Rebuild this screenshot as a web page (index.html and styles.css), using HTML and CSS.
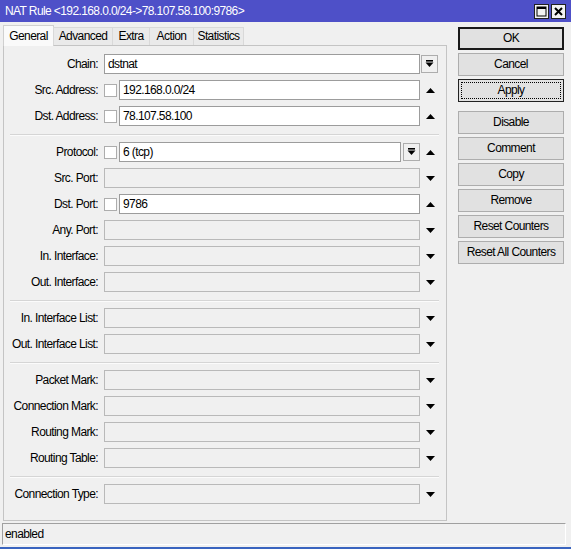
FILE: index.html
```html
<!DOCTYPE html>
<html>
<head>
<meta charset="utf-8">
<link rel="stylesheet" href="styles.css">
</head>
<body>
<div class="window">
  <div class="titlebar">
    <span class="title">NAT Rule &lt;192.168.0.0/24-&gt;78.107.58.100:9786&gt;</span>
    <div class="tb-buttons">
      <span class="tb-btn"><svg width="13" height="13" viewBox="0 0 13 13"><rect x="2" y="2" width="9" height="9" fill="none" stroke="#000" stroke-width="1"/><rect x="2" y="2" width="9" height="2" fill="#000"/></svg></span>
      <span class="tb-btn"><svg width="13" height="13" viewBox="0 0 13 13"><path d="M3 3 L10 10 M10 3 L3 10" stroke="#000" stroke-width="2"/></svg></span>
    </div>
  </div>

  <div class="main">
    <div class="left">
      <div class="tabs">
        <div class="tab selected w-general">General</div>
        <div class="tab w-advanced">Advanced</div>
        <div class="tab w-extra">Extra</div>
        <div class="tab w-action">Action</div>
        <div class="tab w-statistics">Statistics</div>
      </div>
      <div class="panel">
        <div class="row">
          <label class="lbl">Chain:</label>
          <div class="field full">dstnat</div>
          <span class="dropbtn chain-drop"><svg width="9" height="8" viewBox="0 0 9 8"><rect x="1" y="0" width="7" height="1.6" fill="#000"/><polygon points="0.5,2.5 8.5,2.5 4.5,7" fill="#000"/></svg></span>
        </div>
        <div class="row">
          <label class="lbl">Src. Address:</label>
          <span class="chk"></span>
          <div class="field withchk">192.168.0.0/24</div>
          <span class="arrow"><svg width="9" height="5" viewBox="0 0 9 5"><polygon points="0,5 9,5 4.5,0" fill="#000"/></svg></span>
        </div>
        <div class="row">
          <label class="lbl">Dst. Address:</label>
          <span class="chk"></span>
          <div class="field withchk">78.107.58.100</div>
          <span class="arrow"><svg width="9" height="5" viewBox="0 0 9 5"><polygon points="0,5 9,5 4.5,0" fill="#000"/></svg></span>
        </div>
        <div class="sep"></div>
        <div class="row">
          <label class="lbl">Protocol:</label>
          <span class="chk"></span>
          <div class="field proto">6 (tcp)</div>
          <span class="dropbtn proto-drop"><svg width="9" height="8" viewBox="0 0 9 8"><rect x="1" y="0" width="7" height="1.6" fill="#000"/><polygon points="0.5,2.5 8.5,2.5 4.5,7" fill="#000"/></svg></span>
          <span class="arrow"><svg width="9" height="5" viewBox="0 0 9 5"><polygon points="0,5 9,5 4.5,0" fill="#000"/></svg></span>
        </div>
        <div class="row">
          <label class="lbl">Src. Port:</label>
          <div class="field full disabled"></div>
          <span class="arrow"><svg width="9" height="5" viewBox="0 0 9 5"><polygon points="0,0 9,0 4.5,5" fill="#000"/></svg></span>
        </div>
        <div class="row">
          <label class="lbl">Dst. Port:</label>
          <span class="chk"></span>
          <div class="field withchk">9786</div>
          <span class="arrow"><svg width="9" height="5" viewBox="0 0 9 5"><polygon points="0,5 9,5 4.5,0" fill="#000"/></svg></span>
        </div>
        <div class="row">
          <label class="lbl">Any. Port:</label>
          <div class="field full disabled"></div>
          <span class="arrow"><svg width="9" height="5" viewBox="0 0 9 5"><polygon points="0,0 9,0 4.5,5" fill="#000"/></svg></span>
        </div>
        <div class="row">
          <label class="lbl">In. Interface:</label>
          <div class="field full disabled"></div>
          <span class="arrow"><svg width="9" height="5" viewBox="0 0 9 5"><polygon points="0,0 9,0 4.5,5" fill="#000"/></svg></span>
        </div>
        <div class="row">
          <label class="lbl">Out. Interface:</label>
          <div class="field full disabled"></div>
          <span class="arrow"><svg width="9" height="5" viewBox="0 0 9 5"><polygon points="0,0 9,0 4.5,5" fill="#000"/></svg></span>
        </div>
        <div class="sep"></div>
        <div class="row">
          <label class="lbl">In. Interface List:</label>
          <div class="field full disabled"></div>
          <span class="arrow"><svg width="9" height="5" viewBox="0 0 9 5"><polygon points="0,0 9,0 4.5,5" fill="#000"/></svg></span>
        </div>
        <div class="row">
          <label class="lbl">Out. Interface List:</label>
          <div class="field full disabled"></div>
          <span class="arrow"><svg width="9" height="5" viewBox="0 0 9 5"><polygon points="0,0 9,0 4.5,5" fill="#000"/></svg></span>
        </div>
        <div class="sep"></div>
        <div class="row">
          <label class="lbl">Packet Mark:</label>
          <div class="field full disabled"></div>
          <span class="arrow"><svg width="9" height="5" viewBox="0 0 9 5"><polygon points="0,0 9,0 4.5,5" fill="#000"/></svg></span>
        </div>
        <div class="row">
          <label class="lbl">Connection Mark:</label>
          <div class="field full disabled"></div>
          <span class="arrow"><svg width="9" height="5" viewBox="0 0 9 5"><polygon points="0,0 9,0 4.5,5" fill="#000"/></svg></span>
        </div>
        <div class="row">
          <label class="lbl">Routing Mark:</label>
          <div class="field full disabled"></div>
          <span class="arrow"><svg width="9" height="5" viewBox="0 0 9 5"><polygon points="0,0 9,0 4.5,5" fill="#000"/></svg></span>
        </div>
        <div class="row">
          <label class="lbl">Routing Table:</label>
          <div class="field full disabled"></div>
          <span class="arrow"><svg width="9" height="5" viewBox="0 0 9 5"><polygon points="0,0 9,0 4.5,5" fill="#000"/></svg></span>
        </div>
        <div class="sep"></div>
        <div class="row">
          <label class="lbl">Connection Type:</label>
          <div class="field full disabled"></div>
          <span class="arrow"><svg width="9" height="5" viewBox="0 0 9 5"><polygon points="0,0 9,0 4.5,5" fill="#000"/></svg></span>
        </div>
      </div>
    </div>

    <div class="right">
      <div class="btn default">OK</div>
      <div class="btn">Cancel</div>
      <div class="btn focused">Apply</div>
      <div class="btn group-start">Disable</div>
      <div class="btn">Comment</div>
      <div class="btn">Copy</div>
      <div class="btn">Remove</div>
      <div class="btn">Reset Counters</div>
      <div class="btn">Reset All Counters</div>
    </div>
  </div>

  <div class="status">enabled</div>
  <div class="bottomline"></div>
</div>
</body>
</html>
```
FILE: styles.css
```css
* { box-sizing: border-box; }
html, body { margin: 0; padding: 0; }
body {
  font-family: "Liberation Sans", Arial, sans-serif;
  font-size: 12px;
  letter-spacing: -0.6px;
  color: #000;
  background: #f0f0f0;
}
.window {
  width: 571px;
  height: 549px;
  background: #f0f0f0;
  overflow: hidden;
  display: flex;
  flex-direction: column;
}
.titlebar {
  height: 22px;
  background: #4e50c8;
  color: #fff;
  display: flex;
  align-items: center;
  justify-content: space-between;
  padding: 0 5px 0 5px;
  flex: none;
}
.title { line-height: 22px; }
.tb-buttons { display: flex; gap: 2px; }
.tb-btn {
  width: 15px;
  height: 15px;
  background: #f2f2f2;
  border: 1px solid #202020;
  display: flex;
  align-items: center;
  justify-content: center;
}
.tb-btn svg { display: block; }

.main {
  display: flex;
  padding: 3px 0 0 3px;
  flex: none;
}
.left { width: 444px; }
.tabs {
  height: 20px;
  display: flex;
  align-items: flex-end;
  position: relative;
  z-index: 1;
}
.tab {
  height: 18px;
  border: 1px solid #d9d9d9;
  border-bottom: none;
  background: #eaeaea;
  text-align: center;
  line-height: 17px;
  margin-left: -1px;
}
.tab.selected {
  height: 21px;
  margin-bottom: -1px;
  margin-left: 0;
  background: #fafafa;
  line-height: 20px;
  border-color: #d0d0d0;
}
.w-general { width: 51px; }
.w-advanced { width: 60px; }
.w-extra { width: 38px; }
.w-action { width: 45px; }
.w-statistics { width: 51px; }

.panel {
  height: 476px;
  border: 1px solid #c4c4c4;
  padding-top: 5px;
}
.row {
  height: 26px;
  display: flex;
  align-items: center;
}
.lbl {
  width: 94px;
  margin-right: 6px;
  text-align: right;
  white-space: nowrap;
  flex: none;
}
.field {
  height: 20px;
  background: #fff;
  border: 1px solid #9c9c9c;
  padding: 0 3px;
  line-height: 18px;
  white-space: nowrap;
  flex: none;
}
.field.full { width: 316px; }
.field.withchk { width: 301px; }
.field.proto { width: 282px; }
.field.disabled {
  background: #f0f0f0;
  border-color: #b9b9b9;
}
.chk {
  width: 13px;
  height: 13px;
  background: #fff;
  border: 1px solid #adadad;
  margin-right: 2px;
  flex: none;
}
.dropbtn {
  width: 17px;
  height: 18px;
  border: 1px solid #adadad;
  background: #f0f0f0;
  display: flex;
  align-items: center;
  justify-content: center;
  flex: none;
}
.dropbtn svg { display: block; }
.chain-drop { margin-left: 1px; }
.proto-drop { margin-left: 2px; }
.arrow {
  width: 20px;
  display: flex;
  justify-content: center;
  align-items: center;
  flex: none;
}
.arrow svg { display: block; }
.sep {
  height: 10px;
  display: flex;
  align-items: center;
}
.sep::before {
  content: "";
  display: block;
  width: 429px;
  margin-left: 6px;
  height: 1px;
  background: #d5d5d5;
  box-shadow: 0 1px 0 #fbfbfb;
}

.right {
  margin-left: 11px;
  width: 106px;
  padding-top: 2px;
}
.btn {
  height: 23px;
  margin-bottom: 3px;
  border: 1px solid #adadad;
  background: #e1e1e1;
  text-align: center;
  line-height: 21px;
}
.btn.default {
  border: 2px solid #1a1a1a;
  line-height: 19px;
}
.btn.focused {
  border-color: #222;
  outline: 1px dotted #000;
  outline-offset: -4px;
}
.btn.group-start { margin-top: 9px; }

.status {
  margin: 2px 0 0 2px;
  width: 564px;
  height: 22px;
  border-top: 1px solid #a0a0a0;
  border-left: 1px solid #a0a0a0;
  border-right: 1px solid #fff;
  border-bottom: 1px solid #fff;
  padding-left: 2px;
  line-height: 20px;
  flex: none;
}
.bottomline {
  margin-top: 2px;
  height: 2px;
  background: #3a64bf;
  flex: none;
}
```
